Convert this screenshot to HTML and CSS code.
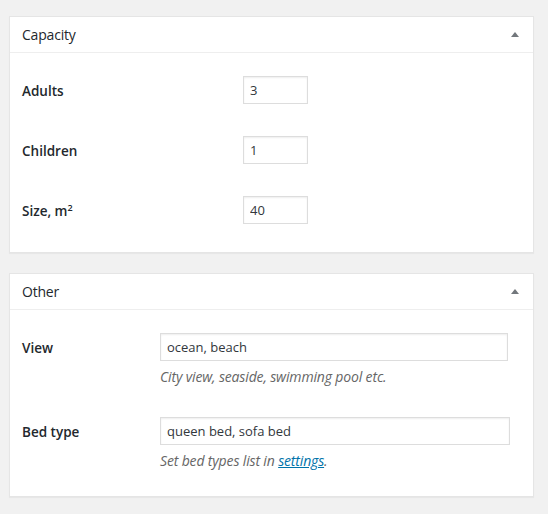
FILE: index.html
```html
<!DOCTYPE html>
<html>
<head>
<meta charset="utf-8">
<link rel="stylesheet" href="styles.css">
</head>
<body>
<div class="postbox">
  <div class="postbox-header">
    <h2 class="hndle">Capacity</h2>
    <span class="toggle-indicator"></span>
  </div>
  <div class="inside inside-capacity">
    <div class="row row-short">
      <label class="th th-wide">Adults</label>
      <div class="td"><input class="small-text" type="text" value="3"></div>
    </div>
    <div class="row row-short">
      <label class="th th-wide">Children</label>
      <div class="td"><input class="small-text" type="text" value="1"></div>
    </div>
    <div class="row row-short">
      <label class="th th-wide">Size, m<sup>2</sup></label>
      <div class="td"><input class="small-text" type="text" value="40"></div>
    </div>
  </div>
</div>

<div class="postbox">
  <div class="postbox-header">
    <h2 class="hndle">Other</h2>
    <span class="toggle-indicator"></span>
  </div>
  <div class="inside inside-other">
    <div class="row row-field row-first">
      <label class="th th-narrow">View</label>
      <div class="td">
        <input class="regular-text" type="text" value="ocean, beach">
        <p class="description">City view, seaside, swimming pool etc.</p>
      </div>
    </div>
    <div class="row row-field row-second">
      <label class="th th-narrow">Bed type</label>
      <div class="td">
        <input class="regular-text wider" type="text" value="queen bed, sofa bed">
        <p class="description">Set bed types list in <a href="#">settings</a>.</p>
      </div>
    </div>
  </div>
</div>
</body>
</html>
```

FILE: styles.css
```css
* { box-sizing: border-box; }

html, body {
  margin: 0;
  background: #f1f1f1;
}

body {
  padding: 16px 14px 0 9px;
  font-family: "Open Sans", "Noto Sans", sans-serif;
  font-size: 13px;
  color: #23282d;
}

.postbox {
  background: #fff;
  border: 1px solid #e5e5e5;
  box-shadow: 0 1px 1px rgba(0, 0, 0, 0.04);
  margin-bottom: 20px;
}

.postbox-header {
  display: flex;
  align-items: center;
  height: 36px;
  padding: 0 14px 0 12px;
  border-bottom: 1px solid #eee;
}

.hndle {
  margin: 0;
  font-size: 14px;
  font-weight: 400;
  color: #23282d;
  letter-spacing: -0.2px;
}

.toggle-indicator {
  margin-left: auto;
  width: 0;
  height: 0;
  border-left: 4px solid transparent;
  border-right: 4px solid transparent;
  border-bottom: 5px solid #72777c;
}

.inside {
  padding: 0 12px;
}

.inside-capacity {
  padding-top: 7px;
  padding-bottom: 12px;
}

.inside-other {
  padding-top: 23px;
  padding-bottom: 26px;
}

.row {
  display: flex;
}

.row-short {
  height: 60px;
  align-items: center;
}

.row-short .th {
  padding-top: 2px;
}

.th {
  flex: none;
  font-weight: 600;
  font-size: 13.5px;
  color: #23282d;
}

.th sup {
  font-size: 9px;
  vertical-align: 5px;
  line-height: 0;
}

.th-wide { width: 221px; }
.th-narrow { width: 138px; }

.row-field .th {
  padding-top: 6px;
  line-height: 18px;
}

.row-second {
  margin-top: 31px;
}

.td {
  flex: none;
}

input {
  display: block;
  height: 28px;
  margin: 0;
  border: 1px solid #ddd;
  box-shadow: inset 0 1px 2px rgba(0, 0, 0, 0.07);
  background: #fff;
  color: #32373c;
  font-family: "Open Sans", "Noto Sans", sans-serif;
  font-size: 13px;
  padding: 0 6px;
  outline: none;
}

.small-text { width: 65px; }
.regular-text { width: 348px; }
.regular-text.wider { width: 350px; }

.description {
  margin: 7px 0 0;
  font-style: italic;
  font-size: 14px;
  line-height: 18px;
  color: #666;
  letter-spacing: -0.15px;
}

.description a {
  color: #0073aa;
  text-decoration: underline;
}
```
